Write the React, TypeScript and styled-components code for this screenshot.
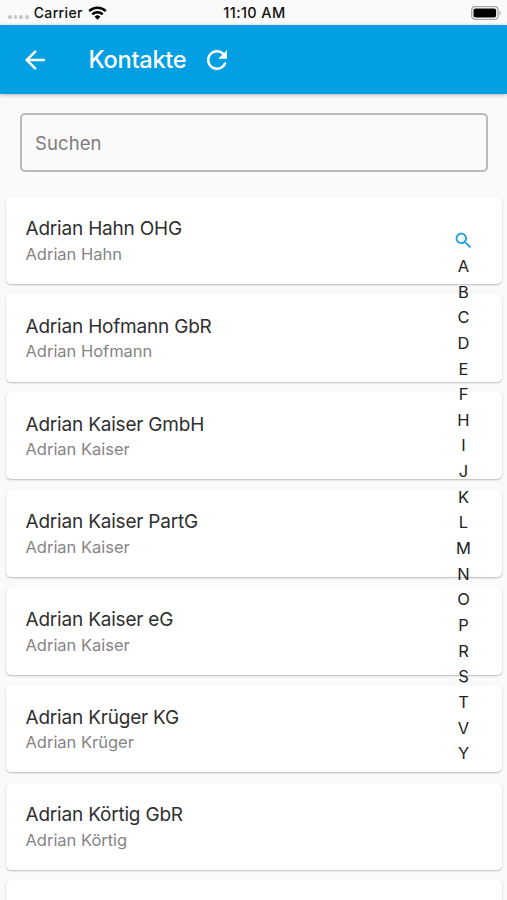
import React from "react";
import styled, { createGlobalStyle } from "styled-components";

const GlobalStyle = createGlobalStyle`
  * { box-sizing: border-box; }
  html, body { margin: 0; padding: 0; background: #fafafa; }
  body { font-family: Inter, sans-serif; overflow: hidden; }
`;

const Screen = styled.div`
  position: relative;
  display: flex;
  flex-direction: column;
  width: 507px;
  height: 900px;
  overflow: hidden;
  background: #fafafa;
`;

const StatusBar = styled.div`
  display: grid;
  grid-template-columns: 1fr auto 1fr;
  align-items: center;
  flex: none;
  height: 25px;
  padding: 1px 6px 0 8px;
  color: #111;
  font-size: 14px;
  line-height: 24px;
  font-weight: 500;
`;

const StatusGroup = styled.div<{ $end?: boolean }>`
  display: flex;
  align-items: center;
  justify-content: ${(p) => (p.$end ? "flex-end" : "flex-start")};
`;

const SignalDots = styled.div`
  display: flex;
  gap: 2px;
  margin: 8px 5px 0 0;
`;

const Dot = styled.span`
  width: 3.7px;
  height: 3.7px;
  border-radius: 50%;
  background: #c6c6c6;
`;

const Carrier = styled.span`
  margin-right: 5px;
  letter-spacing: 0.35px;
`;

const Time = styled.span`
  font-size: 14.5px;
  letter-spacing: 0.4px;
`;

const AppBar = styled.header`
  position: relative;
  display: flex;
  align-items: center;
  flex: none;
  height: 69px;
  padding-left: 20px;
  background: #029fe3;
  color: #fff;
  box-shadow: 0 1px 4px rgba(0, 0, 0, 0.28);
`;

const IconButton = styled.button`
  display: flex;
  padding: 0;
  border: 0;
  background: none;
  color: inherit;
`;

const Title = styled.h1`
  margin: 0 15.5px 0 38.5px;
  font-size: 23.6px;
  line-height: 30px;
  font-weight: 500;
  letter-spacing: -0.27px;
`;

const SearchField = styled.input`
  flex: none;
  height: 59px;
  margin: 19px 19px 24.5px 20px;
  padding: 1px 13px 0;
  border: 2px solid #bababa;
  border-radius: 5px;
  background: transparent;
  font: 400 18.5px Inter, sans-serif;
  letter-spacing: 0.1px;
  outline: none;
  &::placeholder { color: #7d7d7d; opacity: 1; }
`;

const ContactList = styled.div`
  display: flex;
  flex-direction: column;
  gap: 10.2px;
  padding: 0 5px 0 6px;
`;

const ContactCard = styled.article`
  flex: none;
  height: 87.5px;
  padding: 19.8px 20px 0 19.5px;
  border-radius: 5px;
  background: #fff;
  box-shadow: 0 1px 2px rgba(0, 0, 0, 0.26);
`;

const Name = styled.div`
  color: #303030;
  font-size: 19px;
  line-height: 25.5px;
  letter-spacing: -0.2px;
`;

const Person = styled.div`
  color: #858585;
  font-size: 16.5px;
  line-height: 24.6px;
  letter-spacing: -0.02px;
`;

const AlphabetIndex = styled.nav`
  position: absolute;
  top: 227px;
  left: 450px;
  display: flex;
  flex-direction: column;
  align-items: center;
  width: 27px;
`;

const Letter = styled.span`
  height: 25.65px;
  color: #222;
  font-size: 16.5px;
  line-height: 25.65px;
`;

const SearchIconSlot = styled.span`
  display: flex;
  align-items: center;
  height: 27px;
  padding-left: 0.5px;
  color: #159fe3;
`;

const contacts = [
  ["Adrian Hahn OHG", "Adrian Hahn"],
  ["Adrian Hofmann GbR", "Adrian Hofmann"],
  ["Adrian Kaiser GmbH", "Adrian Kaiser"],
  ["Adrian Kaiser PartG", "Adrian Kaiser"],
  ["Adrian Kaiser eG", "Adrian Kaiser"],
  ["Adrian Krüger KG", "Adrian Krüger"],
  ["Adrian Körtig GbR", "Adrian Körtig"],
  ["", ""],
];

const MaterialIcon = ({ d, size }: { d: string; size: number }) => (
  <svg width={size} height={size} viewBox="0 0 24 24" fill="currentColor" aria-hidden>
    <path d={d} />
  </svg>
);

const ARROW_BACK = "M20 11H7.83l5.59-5.59L12 4l-8 8 8 8 1.41-1.41L7.83 13H20v-2z";
const REFRESH =
  "M17.65 6.35C16.2 4.9 14.21 4 12 4c-4.42 0-7.99 3.58-7.99 8s3.57 8 7.99 8c3.73 0 6.84-2.55 7.73-6h-2.08c-.82 2.33-3.04 4-5.65 4-3.31 0-6-2.69-6-6s2.69-6 6-6c1.66 0 3.14.69 4.22 1.78L13 11h7V4l-2.35 2.35z";
const SEARCH =
  "M15.5 14h-.79l-.28-.27C15.41 12.59 16 11.11 16 9.5 16 5.91 13.09 3 9.5 3S3 5.91 3 9.5 5.91 16 9.5 16c1.61 0 3.09-.59 4.23-1.57l.27.28v.79l5 4.99L20.49 19l-4.99-5zm-6 0C7.01 14 5 11.99 5 9.5S7.01 5 9.5 5 14 7.01 14 9.5 11.99 14 9.5 14z";

const WifiIcon = () => (
  <svg width="19" height="14" viewBox="0 0 19 14" fill="none" stroke="#000" strokeWidth="2.5" aria-hidden>
    <path d="M1.2 5.2a11.8 11.8 0 0 1 16.6 0" />
    <path d="M4.3 8.3a7.4 7.4 0 0 1 10.4 0" />
    <path d="M9.5 13.7 6.6 10.8a4.1 4.1 0 0 1 5.8 0z" fill="#000" stroke="none" />
  </svg>
);

const BatteryIcon = () => (
  <svg width="30" height="14" viewBox="0 0 30 14" aria-hidden>
    <rect x=".7" y=".7" width="26.3" height="12.6" rx="3.4" fill="#fff" stroke="#a5a5a5" strokeWidth="1.3" />
    <rect x="2.5" y="2.4" width="22.6" height="9.2" rx="1.8" fill="#000" />
    <path d="M28.5 4.7c1.6.5 1.6 4.1 0 4.6z" fill="#a5a5a5" />
  </svg>
);

export default function App() {
  return (
    <Screen>
      <GlobalStyle />
      <StatusBar>
        <StatusGroup>
          <SignalDots><Dot /><Dot /><Dot /><Dot /></SignalDots>
          <Carrier>Carrier</Carrier>
          <WifiIcon />
        </StatusGroup>
        <Time>11:10 AM</Time>
        <StatusGroup $end><BatteryIcon /></StatusGroup>
      </StatusBar>
      <AppBar>
        <IconButton aria-label="Zurück"><MaterialIcon d={ARROW_BACK} size={30} /></IconButton>
        <Title>Kontakte</Title>
        <IconButton aria-label="Aktualisieren"><MaterialIcon d={REFRESH} size={30} /></IconButton>
      </AppBar>
      <SearchField placeholder="Suchen" />
      <ContactList>
        {contacts.map(([name, person], i) => (
          <ContactCard key={i}>
            <Name>{name}</Name>
            <Person>{person}</Person>
          </ContactCard>
        ))}
      </ContactList>
      <AlphabetIndex>
        <SearchIconSlot><MaterialIcon d={SEARCH} size={21} /></SearchIconSlot>
        {[..."ABCDEFHIJKLMNOPRSTVY"].map((letter) => <Letter key={letter}>{letter}</Letter>)}
      </AlphabetIndex>
    </Screen>
  );
}
